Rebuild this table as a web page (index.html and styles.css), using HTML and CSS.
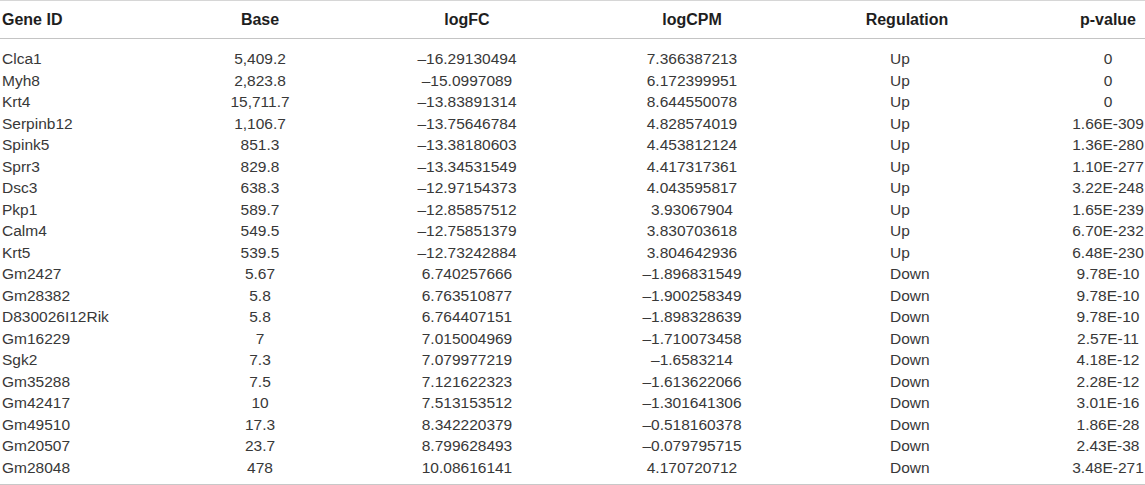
FILE: index.html
```html
<!DOCTYPE html>
<html lang="en">
<head>
<meta charset="utf-8">
<title>Differentially expressed genes</title>
<link rel="stylesheet" href="styles.css">
</head>
<body>
<table class="gene-table">
  <colgroup>
    <col class="c-id"><col class="c-base"><col class="c-fc"><col class="c-cpm"><col class="c-reg"><col class="c-p">
  </colgroup>
  <thead>
    <tr>
      <th class="left">Gene ID</th>
      <th>Base</th>
      <th>logFC</th>
      <th>logCPM</th>
      <th>Regulation</th>
      <th class="pcol">p-value</th>
    </tr>
  </thead>
  <tbody>
    <tr class="first"><td class="left">Clca1</td><td>5,409.2</td><td>–16.29130494</td><td>7.366387213</td><td class="reg">Up</td><td class="pcol">0</td></tr>
    <tr><td class="left">Myh8</td><td>2,823.8</td><td>–15.0997089</td><td>6.172399951</td><td class="reg">Up</td><td class="pcol">0</td></tr>
    <tr><td class="left">Krt4</td><td>15,711.7</td><td>–13.83891314</td><td>8.644550078</td><td class="reg">Up</td><td class="pcol">0</td></tr>
    <tr><td class="left">Serpinb12</td><td>1,106.7</td><td>–13.75646784</td><td>4.828574019</td><td class="reg">Up</td><td class="pcol">1.66E-309</td></tr>
    <tr><td class="left">Spink5</td><td>851.3</td><td>–13.38180603</td><td>4.453812124</td><td class="reg">Up</td><td class="pcol">1.36E-280</td></tr>
    <tr><td class="left">Sprr3</td><td>829.8</td><td>–13.34531549</td><td>4.417317361</td><td class="reg">Up</td><td class="pcol">1.10E-277</td></tr>
    <tr><td class="left">Dsc3</td><td>638.3</td><td>–12.97154373</td><td>4.043595817</td><td class="reg">Up</td><td class="pcol">3.22E-248</td></tr>
    <tr><td class="left">Pkp1</td><td>589.7</td><td>–12.85857512</td><td>3.93067904</td><td class="reg">Up</td><td class="pcol">1.65E-239</td></tr>
    <tr><td class="left">Calm4</td><td>549.5</td><td>–12.75851379</td><td>3.830703618</td><td class="reg">Up</td><td class="pcol">6.70E-232</td></tr>
    <tr><td class="left">Krt5</td><td>539.5</td><td>–12.73242884</td><td>3.804642936</td><td class="reg">Up</td><td class="pcol">6.48E-230</td></tr>
    <tr><td class="left">Gm2427</td><td>5.67</td><td>6.740257666</td><td>–1.896831549</td><td class="reg">Down</td><td class="pcol">9.78E-10</td></tr>
    <tr><td class="left">Gm28382</td><td>5.8</td><td>6.763510877</td><td>–1.900258349</td><td class="reg">Down</td><td class="pcol">9.78E-10</td></tr>
    <tr><td class="left">D830026I12Rik</td><td>5.8</td><td>6.764407151</td><td>–1.898328639</td><td class="reg">Down</td><td class="pcol">9.78E-10</td></tr>
    <tr><td class="left">Gm16229</td><td>7</td><td>7.015004969</td><td>–1.710073458</td><td class="reg">Down</td><td class="pcol">2.57E-11</td></tr>
    <tr><td class="left">Sgk2</td><td>7.3</td><td>7.079977219</td><td>–1.6583214</td><td class="reg">Down</td><td class="pcol">4.18E-12</td></tr>
    <tr><td class="left">Gm35288</td><td>7.5</td><td>7.121622323</td><td>–1.613622066</td><td class="reg">Down</td><td class="pcol">2.28E-12</td></tr>
    <tr><td class="left">Gm42417</td><td>10</td><td>7.513153512</td><td>–1.301641306</td><td class="reg">Down</td><td class="pcol">3.01E-16</td></tr>
    <tr><td class="left">Gm49510</td><td>17.3</td><td>8.342220379</td><td>–0.518160378</td><td class="reg">Down</td><td class="pcol">1.86E-28</td></tr>
    <tr><td class="left">Gm20507</td><td>23.7</td><td>8.799628493</td><td>–0.079795715</td><td class="reg">Down</td><td class="pcol">2.43E-38</td></tr>
    <tr class="last"><td class="left">Gm28048</td><td>478</td><td>10.08616141</td><td>4.170720712</td><td class="reg">Down</td><td class="pcol">3.48E-271</td></tr>
  </tbody>
</table>
</body>
</html>
```
FILE: styles.css
```css
html, body {
  margin: 0;
  padding: 0;
  background: #ffffff;
}

.gene-table {
  width: 1145px;
  border-collapse: collapse;
  table-layout: fixed;
  font-family: "Liberation Sans", Arial, Helvetica, sans-serif;
  font-size: 15.5px;
  color: #383838;
}

.c-id { width: 170px; }
.c-base { width: 180px; }
.c-fc { width: 234px; }
.c-cpm { width: 216px; }
.c-reg { width: 214px; }
.c-p { width: 131px; }

.gene-table th,
.gene-table td {
  padding: 0;
  text-align: center;
  white-space: nowrap;
}

.gene-table thead tr {
  border-top: 1px solid #d6d6d6;
  border-bottom: 1px solid #c4c4c4;
}

.gene-table th {
  height: 37px;
  font-size: 16px;
  font-weight: bold;
  color: #1e1e1e;
  vertical-align: middle;
}

.gene-table td {
  height: 21.5px;
  line-height: 21.5px;
}

.gene-table .left {
  text-align: left;
  padding-left: 2px;
}

.gene-table td.reg {
  text-align: left;
  padding-left: 90px;
}

.gene-table .pcol {
  padding-left: 57px;
}

.gene-table tr.first td {
  padding-top: 9px;
}

.gene-table tr.last td {
  padding-bottom: 6px;
}

.gene-table tr.last {
  border-bottom: 1px solid #c8c8c8;
}
```
